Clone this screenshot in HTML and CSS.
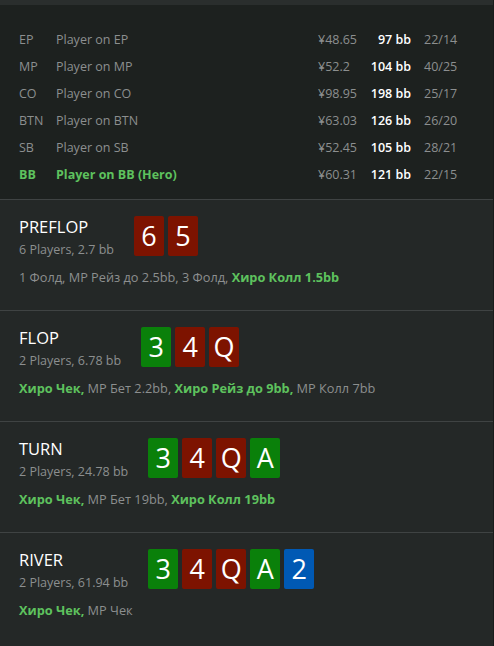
FILE: index.html
```html
<!DOCTYPE html>
<html lang="ru">
<head>
    <meta charset="UTF-8">
    <meta name="viewport" content="width=device-width, initial-scale=1.0">
    <title>Раздача</title>
    <link rel="stylesheet" href="styles.css">
</head>
<body>
    <div class="hand">
        <div class="players">
            <div class="player">
                <span class="pos">EP</span>
                <span class="name">Player on EP</span>
                <span class="money">¥48.65</span>
                <span class="stack">97 bb</span>
                <span class="ratio">22/14</span>
            </div>
            <div class="player">
                <span class="pos">MP</span>
                <span class="name">Player on MP</span>
                <span class="money">¥52.2</span>
                <span class="stack">104 bb</span>
                <span class="ratio">40/25</span>
            </div>
            <div class="player">
                <span class="pos">CO</span>
                <span class="name">Player on CO</span>
                <span class="money">¥98.95</span>
                <span class="stack">198 bb</span>
                <span class="ratio">25/17</span>
            </div>
            <div class="player">
                <span class="pos">BTN</span>
                <span class="name">Player on BTN</span>
                <span class="money">¥63.03</span>
                <span class="stack">126 bb</span>
                <span class="ratio">26/20</span>
            </div>
            <div class="player">
                <span class="pos">SB</span>
                <span class="name">Player on SB</span>
                <span class="money">¥52.45</span>
                <span class="stack">105 bb</span>
                <span class="ratio">28/21</span>
            </div>
            <div class="player hero">
                <span class="pos">BB</span>
                <span class="name">Player on BB (Hero)</span>
                <span class="money">¥60.31</span>
                <span class="stack">121 bb</span>
                <span class="ratio">22/15</span>
            </div>
        </div>

        <div class="street">
            <div class="street-head">
                <div class="street-info">
                    <div class="street-name">PREFLOP</div>
                    <div class="street-pot">6 Players, 2.7 bb</div>
                </div>
                <div class="cards">
                    <span class="card red">6</span>
                    <span class="card red">5</span>
                </div>
            </div>
            <div class="actions">1 Фолд, MP Рейз до 2.5bb, 3 Фолд, <b>Хиро Колл 1.5bb</b></div>
        </div>

        <div class="street">
            <div class="street-head">
                <div class="street-info">
                    <div class="street-name">FLOP</div>
                    <div class="street-pot">2 Players, 6.78 bb</div>
                </div>
                <div class="cards">
                    <span class="card green">3</span>
                    <span class="card red">4</span>
                    <span class="card red">Q</span>
                </div>
            </div>
            <div class="actions"><b>Хиро Чек,</b> MP Бет 2.2bb, <b>Хиро Рейз до 9bb,</b> MP Колл 7bb</div>
        </div>

        <div class="street">
            <div class="street-head">
                <div class="street-info">
                    <div class="street-name">TURN</div>
                    <div class="street-pot">2 Players, 24.78 bb</div>
                </div>
                <div class="cards">
                    <span class="card green">3</span>
                    <span class="card red">4</span>
                    <span class="card red">Q</span>
                    <span class="card green">A</span>
                </div>
            </div>
            <div class="actions"><b>Хиро Чек,</b> MP Бет 19bb, <b>Хиро Колл 19bb</b></div>
        </div>

        <div class="street">
            <div class="street-head">
                <div class="street-info">
                    <div class="street-name">RIVER</div>
                    <div class="street-pot">2 Players, 61.94 bb</div>
                </div>
                <div class="cards">
                    <span class="card green">3</span>
                    <span class="card red">4</span>
                    <span class="card red">Q</span>
                    <span class="card green">A</span>
                    <span class="card blue">2</span>
                </div>
            </div>
            <div class="actions"><b>Хиро Чек,</b> MP Чек</div>
        </div>
    </div>
</body>
</html>
```

FILE: styles.css
```css
body {
    margin: 0;
    padding: 0;
    background-color: #242827;
    font-family: "Open Sans", "Noto Sans", sans-serif;
    color: #8c8f8f;
}

.hand {
    height: 646px;
    overflow: hidden;
    border-right: 1px solid #191c1b;
    background-color: #242827;
}

.players {
    border-top: 5px solid #2a2e2d;
    background-color: #1d211f;
    padding: 21px 19px 11px;
    border-bottom: 1px solid #3f4343;
}

.player {
    display: grid;
    grid-template-columns: 37px 1fr 51px 42px 63px;
    height: 27px;
    line-height: 27px;
    font-size: 12.5px;
}

.player .stack {
    text-align: right;
    color: #ffffff;
    font-weight: 600;
}

.player .ratio {
    padding-left: 13px;
}

.player.hero .pos,
.player.hero .name {
    color: #5ec25e;
    font-weight: 700;
}

.street {
    height: 111px;
    box-sizing: border-box;
    padding: 16px 19px 0;
    border-bottom: 1px solid #3f4343;
}

.street:last-child {
    border-bottom: none;
}

.street-head {
    display: flex;
    align-items: flex-start;
    gap: 20px;
}

.street-name {
    font-size: 16.5px;
    line-height: 22px;
    color: #ffffff;
}

.street-pot {
    margin-top: 3px;
    font-size: 12.5px;
    line-height: 18px;
}

.cards {
    display: flex;
    gap: 4px;
}

.card {
    width: 30px;
    height: 40px;
    border-radius: 2px;
    color: #ffffff;
    font-size: 27px;
    line-height: 40px;
    text-align: center;
}

.card.red {
    background-color: #7d1300;
}

.card.green {
    background-color: #0a800a;
}

.card.blue {
    background-color: #0059b4;
}

.actions {
    margin-top: 9px;
    font-size: 12.75px;
    line-height: 18px;
}

.actions b {
    color: #5ec25e;
    font-weight: 700;
}
```
